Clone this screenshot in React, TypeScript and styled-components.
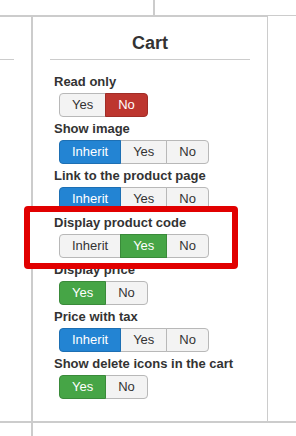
import React from "react";
import styled, { createGlobalStyle, css } from "styled-components";

const GlobalStyle = createGlobalStyle`
  html, body { margin: 0; padding: 0; background: #fff; }
  body {
    font-family: "Liberation Sans", Arial, sans-serif;
    color: #333;
    width: 296px;
    height: 436px;
    overflow: hidden;
  }
`;

const LINE = "#cccccc";

const Page = styled.div`
  width: 296px;
`;

const TopStrip = styled.div`
  display: flex;
  height: 15px;
`;

const TopCell = styled.div`
  width: 153px;
  border-right: 2px solid ${LINE};
`;

const MainRow = styled.div`
  display: flex;
`;

const SideCell = styled.div`
  flex: none;
  width: 31px;
  border-top: 2px solid ${LINE};
  border-right: 2px solid ${LINE};
  border-bottom: 2px solid ${LINE};
`;

const NeighborRule = styled.div`
  width: 14px;
  height: 42px;
  border-bottom: 1px solid ${LINE};
`;

const CartCell = styled.section`
  flex: none;
  width: 200px;
  padding: 0 17px 22px 17px;
  border-top: 2px solid ${LINE};
  border-bottom: 2px solid ${LINE};
  border-right: 1px solid ${LINE};
`;

const RightCell = styled.div`
  flex: 1;
  border-top: 1px solid ${LINE};
  border-bottom: 2px solid ${LINE};
`;

const BottomStrip = styled.div`
  display: flex;
  height: 13px;
`;

const BottomCell = styled.div`
  width: 31px;
  border-right: 2px solid ${LINE};
`;

const Title = styled.h2`
  margin: 0;
  padding: 16px 0 6px;
  font-size: 18px;
  line-height: 20px;
  font-weight: bold;
  text-align: center;
  color: #333;
  border-bottom: 1px solid ${LINE};
`;

const Form = styled.div`
  padding-top: 10px;
`;

const Field = styled.div<{ $highlight?: boolean }>`
  margin-top: 3px;
  padding-left: 4px;
  ${(p) =>
    p.$highlight &&
    css`
      position: relative;
      z-index: 1;
      &::before {
        content: "";
        position: absolute;
        top: -8px;
        left: -26px;
        right: 12px;
        bottom: -11px;
        border: 6px solid #e10000;
        border-radius: 4px;
        background: #fff;
        z-index: -1;
      }
    `}
`;

const Label = styled.div`
  font-size: 13px;
  font-weight: bold;
  line-height: 18px;
  margin-bottom: 2px;
  color: #333;
`;

const Group = styled.div`
  display: flex;
  width: max-content;
  margin-left: 5px;
`;

type Tone = "neutral" | "primary" | "success" | "danger";

const tones: Record<Tone, { bg: string; border: string; color: string }> = {
  neutral: { bg: "#f3f3f3", border: "#b8b8b8", color: "#333" },
  primary: { bg: "#2384d3", border: "#1d6fb3", color: "#fff" },
  success: { bg: "#46a546", border: "#3a8a3a", color: "#fff" },
  danger: { bg: "#bd362f", border: "#a02d27", color: "#fff" },
};

const Btn = styled.button<{ $tone: Tone }>`
  margin: 0;
  padding: 2px 12px;
  font-family: "Liberation Sans", Arial, sans-serif;
  font-size: 13px;
  line-height: 18px;
  background: ${(p) => tones[p.$tone].bg};
  color: ${(p) => tones[p.$tone].color};
  border: 1px solid ${(p) => tones[p.$tone].border};
  border-radius: 0;
  position: relative;
  z-index: ${(p) => (p.$tone === "neutral" ? 0 : 1)};
  & + & {
    margin-left: -1px;
  }
  &:first-child {
    border-radius: 4px 0 0 4px;
  }
  &:last-child {
    border-radius: 0 4px 4px 0;
  }
`;

type Option = { text: string; tone: Tone };
type Setting = { label: string; options: Option[]; highlight?: boolean };

const n = (text: string): Option => ({ text, tone: "neutral" });

const settings: Setting[] = [
  { label: "Read only", options: [n("Yes"), { text: "No", tone: "danger" }] },
  { label: "Show image", options: [{ text: "Inherit", tone: "primary" }, n("Yes"), n("No")] },
  { label: "Link to the product page", options: [{ text: "Inherit", tone: "primary" }, n("Yes"), n("No")] },
  {
    label: "Display product code",
    options: [n("Inherit"), { text: "Yes", tone: "success" }, n("No")],
    highlight: true,
  },
  { label: "Display price", options: [{ text: "Yes", tone: "success" }, n("No")] },
  { label: "Price with tax", options: [{ text: "Inherit", tone: "primary" }, n("Yes"), n("No")] },
  { label: "Show delete icons in the cart", options: [{ text: "Yes", tone: "success" }, n("No")] },
];

export default function App() {
  return (
    <Page>
      <GlobalStyle />
      <TopStrip>
        <TopCell />
      </TopStrip>
      <MainRow>
        <SideCell>
          <NeighborRule />
        </SideCell>
        <CartCell>
          <Title>Cart</Title>
          <Form>
            {settings.map((s) => (
              <Field key={s.label} $highlight={s.highlight}>
                <Label>{s.label}</Label>
                <Group>
                  {s.options.map((o) => (
                    <Btn key={o.text} type="button" $tone={o.tone}>
                      {o.text}
                    </Btn>
                  ))}
                </Group>
              </Field>
            ))}
          </Form>
        </CartCell>
        <RightCell />
      </MainRow>
      <BottomStrip>
        <BottomCell />
      </BottomStrip>
    </Page>
  );
}
